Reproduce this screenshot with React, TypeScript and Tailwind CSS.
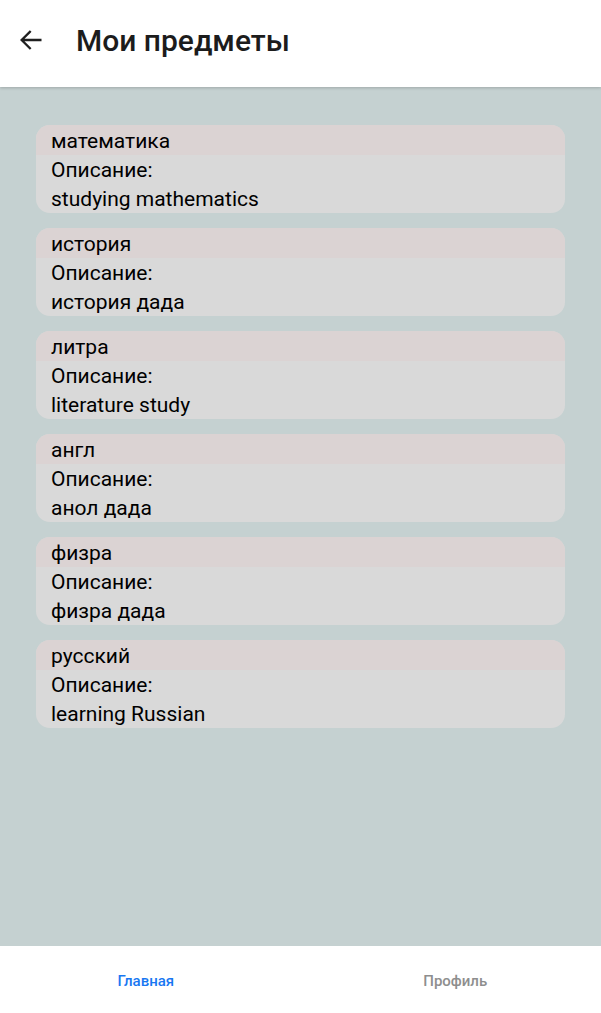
import React from "react";

const items = [
  { name: "математика", desc: "studying mathematics" },
  { name: "история", desc: "история дада" },
  { name: "литра", desc: "literature study" },
  { name: "англ", desc: "анол дада" },
  { name: "физра", desc: "физра дада" },
  { name: "русский", desc: "learning Russian" },
];

export default function App() {
  return (
    <div
      className="flex h-[1013px] w-[601px] flex-col bg-[#c5d1d1] text-black"
      style={{ fontFamily: "Roboto, 'Noto Sans', sans-serif" }}
    >
      <header className="relative z-10 flex h-[87px] shrink-0 items-center bg-white pb-[4px] shadow-[0_1px_3px_rgba(0,0,0,0.2)]">
        <div className="ml-[16px] flex h-[30px] w-[30px] items-center justify-center pb-[3px]">
          <svg width="28" height="28" viewBox="0 0 24 24" fill="none">
            <path
              d="M20 12H4.5M11 5l-7 7 7 7"
              stroke="#1f1f1f"
              strokeWidth="2"
              strokeLinecap="square"
            />
          </svg>
        </div>
        <h1 className="ml-[30px] pb-[2px] text-[30px] font-medium leading-none text-[#1c1c1c]">
          Мои предметы
        </h1>
      </header>

      <main className="flex flex-1 flex-col gap-[15px] px-[36px] pt-[38px]">
        {items.map((it) => (
          <div
            key={it.name}
            className="flex flex-col overflow-hidden rounded-[14px] bg-[#d9d9d9] text-[21px]"
          >
            <div className="flex h-[30px] items-center bg-[#dbd3d3] px-[15px] pt-[3px]">
              {it.name}
            </div>
            <div className="flex h-[29px] items-center px-[15px] pt-[3px]">Описание:</div>
            <div className="flex h-[29px] items-center px-[15px] pt-[3px]">{it.desc}</div>
          </div>
        ))}
      </main>

      <nav className="flex h-[67px] shrink-0 items-center bg-white text-[15px] font-medium">
        <div className="flex flex-1 justify-center pr-[8px] pt-[3px] text-[#1877f2]">Главная</div>
        <div className="flex flex-1 justify-center pl-[10px] pt-[3px] text-[#8e8e8e]">Профиль</div>
      </nav>
    </div>
  );
}
